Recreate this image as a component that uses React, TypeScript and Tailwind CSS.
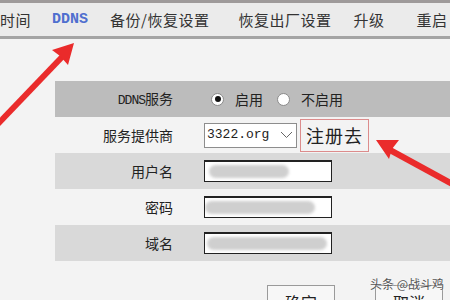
import React from "react";

const CJK = "font-['Noto_Sans_CJK_SC','Noto_Sans',sans-serif]";

const NAV = [
  { text: "时间", ml: "ml-0", active: false },
  { text: "DDNS", ml: "ml-[21px]", active: true },
  { text: "备份/恢复设置", ml: "ml-[22px]", active: false },
  { text: "恢复出厂设置", ml: "ml-[29px]", active: false },
  { text: "升级", ml: "ml-[22px]", active: false },
  { text: "重启", ml: "ml-[32px]", active: false },
];

function Radio({ checked }: { checked?: boolean }) {
  return (
    <span className="w-[13px] h-[13px] rounded-full border border-[#8a8a8a] bg-white flex items-center justify-center">
      {checked && <span className="w-[6px] h-[6px] rounded-full bg-[#111]" />}
    </span>
  );
}

function Blurred({ w, ml = "ml-[4px]" }: { w: string; ml?: string }) {
  return (
    <div className="w-[128px] h-[22px] bg-white border border-[#222] border-t-2 flex items-center overflow-hidden">
      <div className={`${ml} ${w} h-[13px] rounded-full bg-[#cfcfcf] blur-[1.5px]`} />
    </div>
  );
}

function Row({ label, bg, children }: { label: React.ReactNode; bg: string; children: React.ReactNode }) {
  return (
    <div className={`h-[36px] flex items-center ${bg}`}>
      <div className="w-[120px] pr-[2px] text-right text-[14px] text-[#222]">{label}</div>
      <div className="pl-[29px] flex items-center">{children}</div>
    </div>
  );
}

export default function App() {
  return (
    <div className={`relative w-[450px] h-[300px] overflow-hidden bg-[#f3f3f3] ${CJK}`}>
      <div className="h-[3px] bg-[#9e9a9a]" />
      <div className="h-[36px] bg-[#ebebeb] border-b-[3px] border-[#a4a4a4] flex items-center whitespace-nowrap pt-[2px]">
        {NAV.map((n) => (
          <span
            key={n.text}
            className={
              n.active
                ? `${n.ml} font-['Liberation_Mono',monospace] font-bold text-[15px] text-[#4f6fcf]`
                : `${n.ml} text-[15px] tracking-[0.5px] text-[#333]`
            }
          >
            {n.text}
          </span>
        ))}
      </div>

      <div className="ml-[55px] mt-[42px]">
        <Row
          bg="bg-[#bcbcbc]"
          label={
            <>
              <span className="font-['Liberation_Mono',monospace] text-[13px] tracking-[-1px]">DDNS</span>服务
            </>
          }
        >
          <div className="ml-[7px] flex items-center text-[14px] text-[#222]">
            <Radio checked />
            <span className="ml-[11px]">启用</span>
            <span className="ml-[14px]">
              <Radio />
            </span>
            <span className="ml-[11px]">不启用</span>
          </div>
        </Row>
        <Row bg="" label="服务提供商">
          <div className="w-[93px] h-[25px] bg-white border border-[#8d8d8d] flex items-center justify-between px-[2px]">
            <span className="font-['Liberation_Mono',monospace] text-[13px] text-[#222]">3322.org</span>
            <svg width="13" height="8" viewBox="0 0 13 8" className="mr-[1px]">
              <path d="M1 1 L6.5 6.5 L12 1" fill="none" stroke="#666" strokeWidth="1" />
            </svg>
          </div>
          <div className="ml-[3px] h-[33px] px-[5px] border border-[#dc8c8c] flex items-center text-[18px] tracking-[1px] text-[#222]">
            注册去
          </div>
        </Row>
        <Row bg="bg-[#d9d9d9]" label="用户名">
          <Blurred w="w-[80px]" />
        </Row>
        <Row bg="" label="密码">
          <Blurred w="w-[110px]" ml="ml-[0px]" />
        </Row>
        <Row bg="bg-[#d9d9d9]" label="域名">
          <Blurred w="w-[120px]" ml="ml-[2px]" />
        </Row>
      </div>

      <div className="mt-[24px] flex">
        <button className="ml-[267px] w-[68px] h-[26px] bg-[#f7f7f7] border border-[#9a9a9a] text-[16px] text-[#222] pt-[8px] leading-none">
          确定
        </button>
        <button className="ml-[40px] w-[68px] h-[26px] bg-[#f7f7f7] border border-[#9a9a9a] text-[16px] text-[#222] pt-[8px] leading-none">
          取消
        </button>
      </div>

      <span className="absolute left-[370px] top-[275px] text-[12px] text-[#555] whitespace-nowrap [text-shadow:0_0_2px_#fff]">
        头条 @战斗鸡
      </span>

      <svg className="absolute inset-0 pointer-events-none" width="450" height="300" viewBox="0 0 450 300">
        <line x1="-6" y1="128" x2="62" y2="57" stroke="#ea2b2b" strokeWidth="6" />
        <polygon points="74,43 68,65 60,56 52,50" fill="#ea2b2b" />
        <line x1="456" y1="186" x2="390" y2="150" stroke="#ea2b2b" strokeWidth="6" />
        <polygon points="376,140 399,140 392,149 389,159" fill="#ea2b2b" />
      </svg>
    </div>
  );
}
